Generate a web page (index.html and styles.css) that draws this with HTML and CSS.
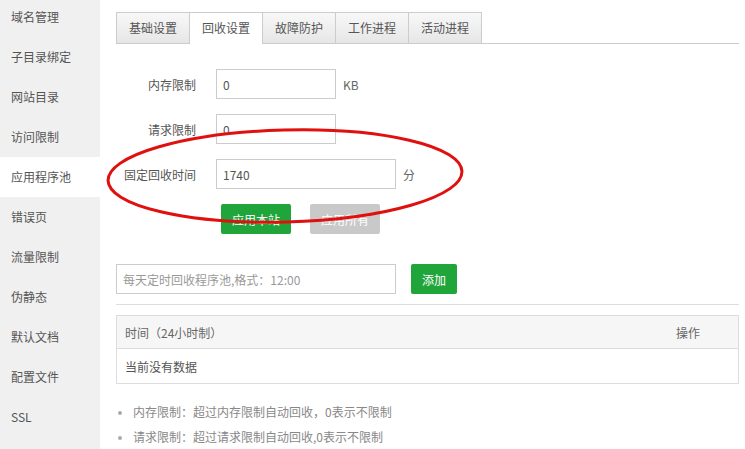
FILE: index.html
```html
<!DOCTYPE html>
<html lang="zh-CN">
<head>
    <meta charset="UTF-8">
    <title>应用程序池</title>
    <link rel="stylesheet" href="styles.css">
</head>
<body>
    <div class="site-panel">
        <ul class="side-menu">
            <li>域名管理</li>
            <li>子目录绑定</li>
            <li>网站目录</li>
            <li>访问限制</li>
            <li class="active">应用程序池</li>
            <li>错误页</li>
            <li>流量限制</li>
            <li>伪静态</li>
            <li>默认文档</li>
            <li>配置文件</li>
            <li>SSL</li>
        </ul>

        <div class="main-box">
            <div class="tab-bar">
                <span class="tab">基础设置</span>
                <span class="tab on">回收设置</span>
                <span class="tab">故障防护</span>
                <span class="tab">工作进程</span>
                <span class="tab">活动进程</span>
            </div>

            <div class="form-line">
                <span class="form-label">内存限制</span>
                <input type="text" class="bt-input" value="0">
                <span class="unit">KB</span>
            </div>
            <div class="form-line">
                <span class="form-label">请求限制</span>
                <input type="text" class="bt-input" value="0">
            </div>
            <div class="form-line">
                <span class="form-label">固定回收时间</span>
                <input type="text" class="bt-input wide" value="1740">
                <span class="unit">分</span>
            </div>
            <div class="form-line btn-line">
                <button class="btn btn-green">应用本站</button>
                <button class="btn btn-grey">应用所有</button>
            </div>

            <div class="add-line">
                <input type="text" class="bt-input time-input" placeholder="每天定时回收程序池,格式：12:00">
                <button class="btn btn-green small">添加</button>
            </div>
            <div class="divider"></div>

            <table class="time-table">
                <thead>
                    <tr>
                        <th>时间（24小时制）</th>
                        <th class="op">操作</th>
                    </tr>
                </thead>
                <tbody>
                    <tr>
                        <td colspan="2">当前没有数据</td>
                    </tr>
                </tbody>
            </table>

            <ul class="help-list">
                <li>内存限制：超过内存限制自动回收，0表示不限制</li>
                <li>请求限制：超过请求限制自动回收,0表示不限制</li>
            </ul>
        </div>
    </div>

    <!-- red hand-drawn mark over the form -->
    <svg class="mark" width="745" height="449" viewBox="0 0 745 449">
        <ellipse cx="285" cy="176" rx="177" ry="46" transform="rotate(-1.5 285 176)"
                 fill="none" stroke="#e0100f" stroke-width="3"/>
    </svg>
</body>
</html>
```

FILE: styles.css
```css
body {
    margin: 0;
    padding: 0;
    font-family: "Noto Sans CJK SC", "Liberation Sans", sans-serif;
    font-size: 12px;
    color: #666;
    background: #fff;
    overflow: hidden;
}
.site-panel {
    display: flex;
    height: 449px;
}
.side-menu {
    width: 100px;
    margin: 0;
    padding: 0;
    list-style: none;
    background-color: #f0f0f1;
    flex-shrink: 0;
}
.side-menu li {
    height: 40px;
    line-height: 40px;
    padding-left: 11px;
    font-size: 12px;
    color: #555;
}
.side-menu li:first-child {
    margin-top: -3px;
}
.side-menu li.active {
    background-color: #fff;
}
.main-box {
    flex: 1;
    padding: 12px 6px 0 16px;
}
.tab-bar {
    display: flex;
    height: 31px;
    border-bottom: 1px solid #ccc;
}
.tab {
    height: 30px;
    line-height: 30px;
    padding: 0 12px;
    border: 1px solid #ccc;
    border-left: none;
    background: linear-gradient(#f8f8f8, #e6e6e6);
    color: #555;
}
.tab:first-child {
    border-left: 1px solid #ccc;
}
.tab.on {
    background: #fff;
    height: 31px;
    border-bottom: none;
}
.form-line {
    display: flex;
    align-items: center;
    height: 30px;
    margin-top: 15px;
}
.tab-bar + .form-line {
    margin-top: 25px;
}
.form-label {
    width: 80px;
    margin-right: 20px;
    text-align: right;
    color: #555;
}
.bt-input {
    box-sizing: border-box;
    width: 120px;
    height: 30px;
    padding: 0 6px;
    border: 1px solid #ccc;
    font-family: inherit;
    font-size: 12px;
    color: #555;
    outline: none;
}
.bt-input.wide {
    width: 180px;
}
.bt-input::placeholder {
    color: #999;
}
.unit {
    margin-left: 7px;
    color: #666;
}
.btn-line {
    padding-left: 105px;
}
.btn {
    box-sizing: border-box;
    height: 30px;
    width: 70px;
    border: none;
    border-radius: 2px;
    font-family: inherit;
    font-size: 12px;
    color: #fff;
    cursor: pointer;
}
.btn-green {
    background-color: #20a53a;
}
.btn-grey {
    background-color: #c9c9c9;
    margin-left: 19px;
}
.btn.small {
    width: 46px;
}
.add-line {
    display: flex;
    margin-top: 30px;
}
.time-input {
    width: 280px;
    margin-right: 15px;
}
.divider {
    height: 1px;
    background: #ddd;
    margin-top: 10px;
}
.time-table {
    width: 100%;
    margin-top: 10px;
    border-collapse: collapse;
    border: 1px solid #ddd;
}
.time-table th {
    height: 32px;
    padding: 0 8px;
    text-align: left;
    font-weight: normal;
    background: #f6f6f6;
    border-bottom: 1px solid #ddd;
    color: #666;
}
.time-table th.op {
    text-align: right;
    padding-right: 38px;
}
.time-table td {
    height: 34px;
    padding: 0 8px;
    color: #555;
}
.help-list {
    margin: 15px 0 0 0;
    padding: 0 0 0 17px;
    color: #888;
}
.help-list li {
    height: 25px;
    line-height: 25px;
}
.help-list li::marker {
    color: #aaa;
    font-size: 10px;
}
.mark {
    position: absolute;
    left: 0;
    top: 0;
    pointer-events: none;
}
```
